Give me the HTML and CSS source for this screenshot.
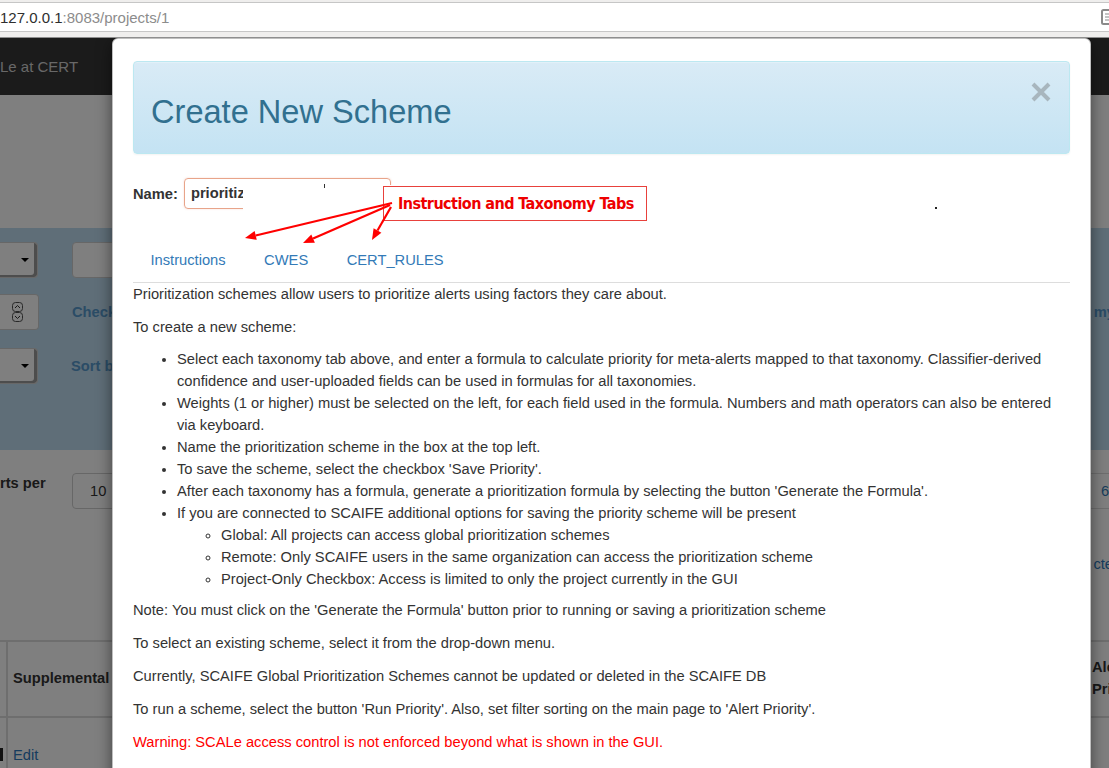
FILE: index.html
```html
<!DOCTYPE html>
<html>
<head>
<meta charset="utf-8">
<title>Create New Scheme</title>
<link rel="stylesheet" href="styles.css">
</head>
<body>
<div class="chrome">
  <div class="urlbar">
    <span class="url"><span class="host">127.0.0.1</span><span class="path">:8083/projects/1</span></span>
    <svg class="reader" width="10" height="16" viewBox="0 0 10 16"><rect x="1" y="1" width="10" height="14" rx="1.5" fill="#fff" stroke="#8a8a8a" stroke-width="2"/><path d="M4 5h6M4 8h6M4 11h6" stroke="#8a8a8a" stroke-width="1.2"/></svg>
  </div>
</div>

<div class="viewport">
  <div class="page">
    <nav class="navbar"><span class="brand">Le at CERT</span></nav>
    <div class="hero"></div>
    <section class="filters">
      <div class="frow">
        <div class="fleft">
          <div class="select"><span class="caret"></span></div>
          <div class="input wide"></div>
        </div>
      </div>
      <div class="frow r2">
        <div class="fleft">
          <div class="spinner"><svg width="11" height="20" viewBox="0 0 11 20"><rect x="0.5" y="0.5" width="10" height="9" rx="3" fill="none" stroke="#505050" stroke-width="1"/><rect x="0.5" y="10.5" width="10" height="9" rx="3" fill="none" stroke="#505050" stroke-width="1"/><path d="M3 6l2.5-2.5 2.5 2.5M3 14l2.5 2.5 2.5-2.5" fill="none" stroke="#333" stroke-width="1"/></svg></div>
          <span class="flabel">Check</span>
        </div>
        <span class="flabel right-cut">my</span>
      </div>
      <div class="frow r3">
        <div class="fleft">
          <div class="select"><span class="caret"></span></div>
          <span class="flabel">Sort by</span>
        </div>
      </div>
    </section>
    <div class="perpage">
      <div class="fleft">
        <span class="plabel">rts per</span>
        <div class="input small"><span>10</span></div>
      </div>
      <div class="pright"><span>6</span></div>
    </div>
    <div class="linkrow"><span class="link cut">cte</span></div>
    <div class="table">
      <div class="trow thead">
        <div class="tcell c0"></div>
        <div class="tcell c1">Supplemental</div>
        <div class="tcell cr">Ale<br>Pri</div>
      </div>
      <div class="trow tbody">
        <div class="tcell c0"><span class="bar"></span></div>
        <div class="tcell c1"><span class="link">Edit</span></div>
      </div>
    </div>
  </div>

  <div class="backdrop"></div>

  <div class="modal">
    <div class="modal-body">
      <div class="head">
        <h2>Create New Scheme</h2>
        <svg class="close" width="20" height="20" viewBox="0 0 20 20"><path d="M2 2L18 18M18 2L2 18" stroke="#a8b6be" stroke-width="4"/></svg>
      </div>
      <div class="name-row">
        <label class="name-label">Name:</label>
        <div class="name-input">prioritization_scheme</div>
      </div>
      <ul class="tabs">
        <li><a>Instructions</a></li>
        <li><a>CWES</a></li>
        <li><a>CERT_RULES</a></li>
      </ul>
      <div class="tab-content">
        <p>Prioritization schemes allow users to prioritize alerts using factors they care about.</p>
        <p>To create a new scheme:</p>
        <ul class="steps">
          <li>Select each taxonomy tab above, and enter a formula to calculate priority for meta-alerts mapped to that taxonomy. Classifier-derived confidence and user-uploaded fields can be used in formulas for all taxonomies.</li>
          <li>Weights (1 or higher) must be selected on the left, for each field used in the formula. Numbers and math operators can also be entered via keyboard.</li>
          <li>Name the prioritization scheme in the box at the top left.</li>
          <li>To save the scheme, select the checkbox 'Save Priority'.</li>
          <li>After each taxonomy has a formula, generate a prioritization formula by selecting the button 'Generate the Formula'.</li>
          <li>If you are connected to SCAIFE additional options for saving the priority scheme will be present
            <ul class="sub">
              <li>Global: All projects can access global prioritization schemes</li>
              <li>Remote: Only SCAIFE users in the same organization can access the prioritization scheme</li>
              <li>Project-Only Checkbox: Access is limited to only the project currently in the GUI</li>
            </ul>
          </li>
        </ul>
        <p>Note: You must click on the 'Generate the Formula' button prior to running or saving a prioritization scheme</p>
        <p>To select an existing scheme, select it from the drop-down menu.</p>
        <p>Currently, SCAIFE Global Prioritization Schemes cannot be updated or deleted in the SCAIFE DB</p>
        <p>To run a scheme, select the button 'Run Priority'. Also, set filter sorting on the main page to 'Alert Priority'.</p>
        <p class="warn">Warning: SCALe access control is not enforced beyond what is shown in the GUI.</p>
      </div>
    </div>

    <div class="patch"></div>
    <span class="tick"></span>
    <div class="callout">Instruction and Taxonomy Tabs</div>
    <svg class="arrows" width="180" height="80" viewBox="0 0 180 80">
      <g stroke="#f00" stroke-width="2.2" fill="none">
        <line x1="160" y1="25" x2="23.7" y2="57.45"/>
        <line x1="158" y1="27" x2="81.08" y2="60.6"/>
        <line x1="159" y1="29" x2="145.49" y2="52.47"/>
      </g>
      <g fill="#f00">
        <polygon points="13,60 24.74,61.83 22.66,53.07"/>
        <polygon points="71,65 82.88,64.72 79.28,56.48"/>
        <polygon points="140,62 149.39,54.72 141.59,50.22"/>
      </g>
    </svg>
    <span class="dot"></span>
  </div>
</div>
</body>
</html>
```

FILE: styles.css
```css
* { box-sizing: border-box; }
html, body { margin: 0; padding: 0; }
body {
  width: 1109px;
  height: 768px;
  overflow: hidden;
  font-family: "Liberation Sans", Arial, sans-serif;
  background: #efeeed;
}

/* browser chrome */
.chrome {
  height: 38px;
  background: #efeeed;
  border-bottom: 1px solid #8e8e8e;
  padding-top: 2px;
}
.urlbar {
  height: 30px;
  background: #fff;
  border-top: 1px solid #c6c6c6;
  border-bottom: 1px solid #c6c6c6;
  font-size: 15px;
  display: flex;
  align-items: center;
  justify-content: space-between;
  white-space: nowrap;
}
.host { color: #2e2e2e; }
.path { color: #8c8c8c; }
.reader { margin-right: -2px; }

/* background page */
.viewport {
  position: relative;
  height: 730px;
  overflow: hidden;
  background: #fff;
}
.page { font-size: 14.7px; line-height: 22px; color: #333; }
.navbar {
  height: 57px;
  background: #363636;
  color: #d0d0d0;
  font-size: 15px;
  display: flex;
  align-items: center;
}
.hero { height: 133px; }
.filters {
  height: 222px;
  background: #bedcf0;
  padding-top: 14px;
}
.frow {
  display: flex;
  justify-content: space-between;
  align-items: center;
  height: 35px;
}
.frow.r2 { margin-top: 17px; height: 36px; }
.frow.r3 { margin-top: 18px; height: 36px; }
.fleft { display: flex; align-items: center; }
.select {
  width: 38px;
  height: 36px;
  background: #fff;
  border: 1px solid #cfcfcf;
  border-left: none;
  border-radius: 0 4px 4px 0;
  box-shadow: inset -3px -2px 0 #9a9a9a;
  display: flex;
  align-items: center;
  justify-content: flex-end;
  padding-right: 8px;
}
.caret {
  width: 0; height: 0;
  border-left: 4px solid transparent;
  border-right: 4px solid transparent;
  border-top: 4px solid #000;
}
.input {
  height: 36px;
  background: #fff;
  border: 1px solid #cfcfcf;
  border-radius: 4px;
}
.input.wide { width: 200px; margin-left: 34px; }
.spinner {
  width: 39px;
  height: 36px;
  background: #fff;
  border: 1px solid #cfcfcf;
  border-left: none;
  border-radius: 0 4px 4px 0;
  display: flex;
  align-items: center;
  padding-left: 12px;
}
.flabel { font-weight: bold; color: #5699cc; margin-left: 33px; }
.right-cut { margin-right: -6px; margin-left: 0; }
.perpage {
  display: flex;
  justify-content: space-between;
  margin-top: 23px;
  height: 36px;
}
.plabel { font-weight: bold; align-self: flex-start; margin-top: -1px; width: 72px; }
.input.small { width: 200px; display: flex; align-items: center; padding-left: 17px; }
.pright {
  width: 50px;
  height: 36px;
  border-top: 1px solid #dcdcdc;
  border-bottom: 1px solid #dcdcdc;
  padding-left: 42px;
  display: flex;
  align-items: center;
  color: #337ab7;
}
.linkrow { display: flex; justify-content: flex-end; margin-top: 44px; height: 22px; }
.link { color: #2c78bc; }
.cut { margin-right: -4px; }
.table { margin-top: 65px; border-top: 2px solid #dcdcdc; }
.trow { display: flex; }
.thead { height: 76px; border-bottom: 2px solid #dcdcdc; }
.tcell { display: flex; align-items: center; }
.c0 { width: 8px; border-right: 2px solid #dcdcdc; }
.c1 { padding-left: 5px; font-weight: bold; margin-top: -2px; }
.tbody .c1 { font-weight: normal; margin-top: 0; padding-top: 14px; }
.tbody { height: 60px; }
.tbody .c0 { align-items: flex-start; padding-top: 30px; }
.bar { width: 3px; height: 13px; background: #222; }
.cr { margin-left: auto; font-weight: bold; width: 17px; overflow: hidden; white-space: nowrap; margin-top: -2px; }

.backdrop {
  position: absolute;
  inset: 0;
  background: rgba(0, 0, 0, 0.5);
}

/* modal */
.modal {
  position: absolute;
  left: 112px;
  top: 0;
  width: 979px;
  height: 760px;
  background: #fff;
  border: 1px solid rgba(0, 0, 0, 0.25);
  border-radius: 6px 6px 0 0;
  box-shadow: 0 5px 15px rgba(0, 0, 0, 0.5);
  font-size: 14.7px;
  line-height: 22px;
  color: #333;
}
.modal-body { padding: 22px 20px 0; }
.head {
  height: 93px;
  border: 1px solid #bce8f1;
  border-radius: 4px;
  background: linear-gradient(to bottom, #d9ebf6, #c4e3f3);
  box-shadow: inset 0 1px 0 rgba(255,255,255,.25), 0 1px 2px rgba(0,0,0,.05);
  padding: 20px 18px 0 17px;
  display: flex;
  justify-content: space-between;
  align-items: flex-start;
}
.head h2 {
  margin: 12px 0 0;
  font-size: 32.6px;
  line-height: 36px;
  font-weight: normal;
  color: #31708f;
}
.name-row {
  display: flex;
  align-items: center;
  margin-top: 24px;
  height: 31px;
}
.name-label { font-weight: bold; margin-right: 6px; }
.name-input {
  width: 207px;
  height: 31px;
  border: 1px solid #e8a48a;
  border-radius: 4px;
  box-shadow: 0 0 2px rgba(232, 140, 110, 0.35);
  padding-left: 6px;
  font-weight: bold;
  line-height: 29px;
  overflow: hidden;
  white-space: nowrap;
}
.tabs {
  list-style: none;
  margin: 28px 0 0;
  padding: 0;
  display: flex;
  border-bottom: 1px solid #ddd;
}
.tabs li { margin-right: 3.5px; }
.tabs a {
  display: block;
  padding: 11px 16.5px;
  border: 1px solid transparent;
  border-bottom: none;
  color: #337ab7;
}
.tab-content p { margin: 0 0 11px; }
.steps { margin: -1px 0 9px; padding-left: 44px; }
.sub { margin: 0; padding-left: 44px; list-style: circle; }
.warn { color: #f00; }

/* screenshot annotation over the dialog */
.patch {
  position: absolute;
  left: 130px;
  top: 146px;
  width: 404px;
  height: 47px;
  background: #fff;
}
.tick { position: absolute; left: 211px; top: 145px; width: 1px; height: 4px; background: #333; }
.dot { position: absolute; left: 822px; top: 168px; width: 2px; height: 2px; background: #222; }
.callout {
  position: absolute;
  left: 270px;
  top: 147px;
  width: 264px;
  height: 35px;
  border: 1px solid #e8413c;
  background: #fff;
  color: #ee0000;
  font-family: "Liberation Sans Narrow", "DejaVu Sans Condensed", sans-serif;
  font-stretch: condensed;
  font-weight: bold;
  font-size: 16px;
  letter-spacing: -0.55px;
  line-height: 33px;
  padding-left: 14px;
  white-space: nowrap;
}
.arrows { position: absolute; left: 119px; top: 139px; }
```
